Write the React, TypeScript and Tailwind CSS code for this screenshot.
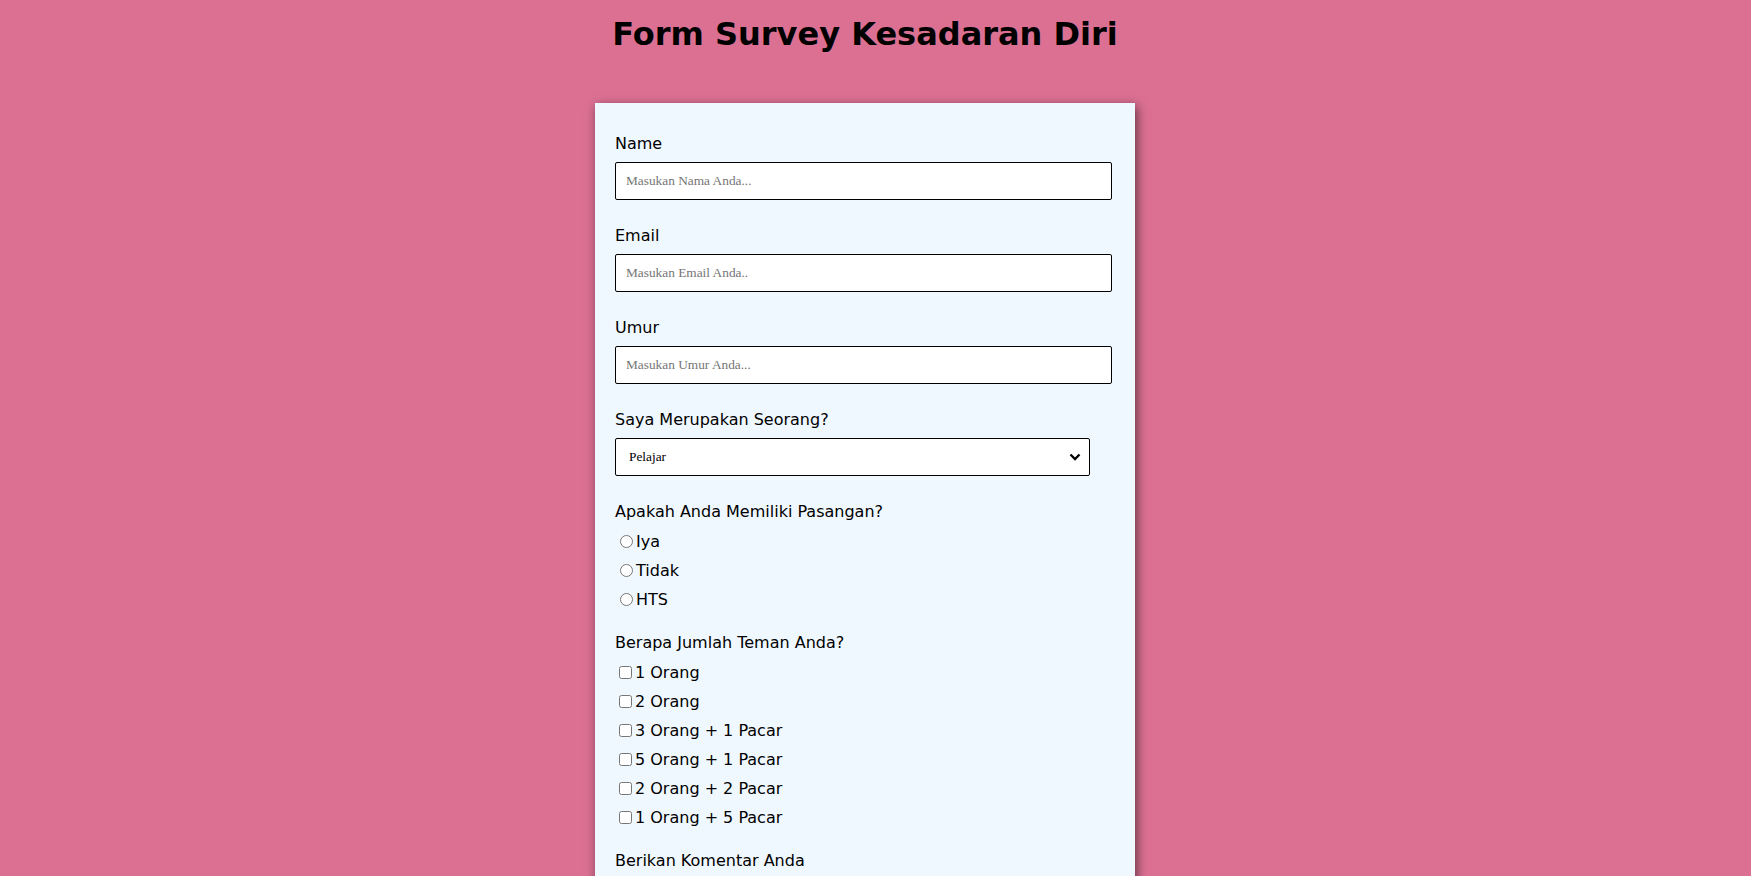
const pasangan = ['Iya', 'Tidak', 'HTS'];
const teman = ['1 Orang', '2 Orang', '3 Orang + 1 Pacar', '5 Orang + 1 Pacar', '2 Orang + 2 Pacar', '1 Orang + 5 Pacar'];

function Field({ label, placeholder, gap }: { label: string; placeholder: string; gap: string }) {
  return (
    <div className={gap}>
      <label className="block h-[20px] leading-[22px]">{label}</label>
      <input
        type="text"
        placeholder={placeholder}
        className="mt-[9px] block h-[38px] w-[497px] rounded-[2px] border border-black bg-white px-[10px] font-['Liberation_Serif',serif] text-[13.33px] text-black placeholder:text-[#757575] outline-none"
      />
    </div>
  );
}

export default function App() {
  return (
    <div className="min-h-screen bg-[#db7093] pr-[21px] font-['DejaVu_Sans',sans-serif] text-[16px] text-black">
      <div className="flex flex-col items-center">
        <h1 className="mt-[15px] text-[32px] font-bold leading-[38px]">Form Survey Kesadaran Diri</h1>
        <div className="mt-[50px] w-[540px] bg-[#f0f8ff] px-[20px] pb-[40px] pt-[30px] shadow-[2px_3px_10px_rgba(0,0,0,0.55)]">
          <Field label="Name" placeholder="Masukan Nama Anda..." gap="" />
          <Field label="Email" placeholder="Masukan Email Anda.." gap="mt-[25px]" />
          <Field label="Umur" placeholder="Masukan Umur Anda..." gap="mt-[25px]" />

          <div className="mt-[25px]">
            <label className="block h-[20px] leading-[22px]">Saya Merupakan Seorang?</label>
            <div className="relative mt-[9px] w-[475px]">
              <select className="block h-[38px] w-full appearance-none rounded-[2px] border border-black bg-white pl-[13px] font-['Liberation_Serif',serif] text-[13.33px] text-black outline-none">
                <option>Pelajar</option>
                <option>Mahasiswa</option>
                <option>Pekerja</option>
              </select>
              <svg className="pointer-events-none absolute right-[9px] top-[15px]" width="12" height="8" viewBox="0 0 12 8">
                <path d="M1.5 1.5 L6 6 L10.5 1.5" fill="none" stroke="black" strokeWidth="2.3" />
              </svg>
            </div>
          </div>

          <div className="mt-[25px]">
            <label className="block h-[20px] leading-[22px]">Apakah Anda Memiliki Pasangan?</label>
            <div className="mt-[6px]">
              {pasangan.map(p => (
                <div key={p} className="flex h-[29px] items-center">
                  <input type="radio" name="pasangan" className="ml-[5px] mr-[3px] h-[13px] w-[13px]" />
                  <span>{p}</span>
                </div>
              ))}
            </div>
          </div>

          <div className="mt-[18px]">
            <label className="block h-[20px] leading-[22px]">Berapa Jumlah Teman Anda?</label>
            <div className="mt-[6px]">
              {teman.map(t => (
                <div key={t} className="flex h-[29px] items-center">
                  <input type="checkbox" className="ml-[4px] mr-[3px] h-[13px] w-[13px]" />
                  <span>{t}</span>
                </div>
              ))}
            </div>
          </div>

          <div className="mt-[18px]">
            <label className="block h-[20px] leading-[22px]">Berikan Komentar Anda</label>
            <textarea className="mt-[9px] block h-[100px] w-[497px] rounded-[2px] border border-black bg-white p-[10px] font-['Liberation_Serif',serif] text-[13.33px]" placeholder="Tulis Komentar Anda..." />
          </div>
        </div>
      </div>
    </div>
  );
}
